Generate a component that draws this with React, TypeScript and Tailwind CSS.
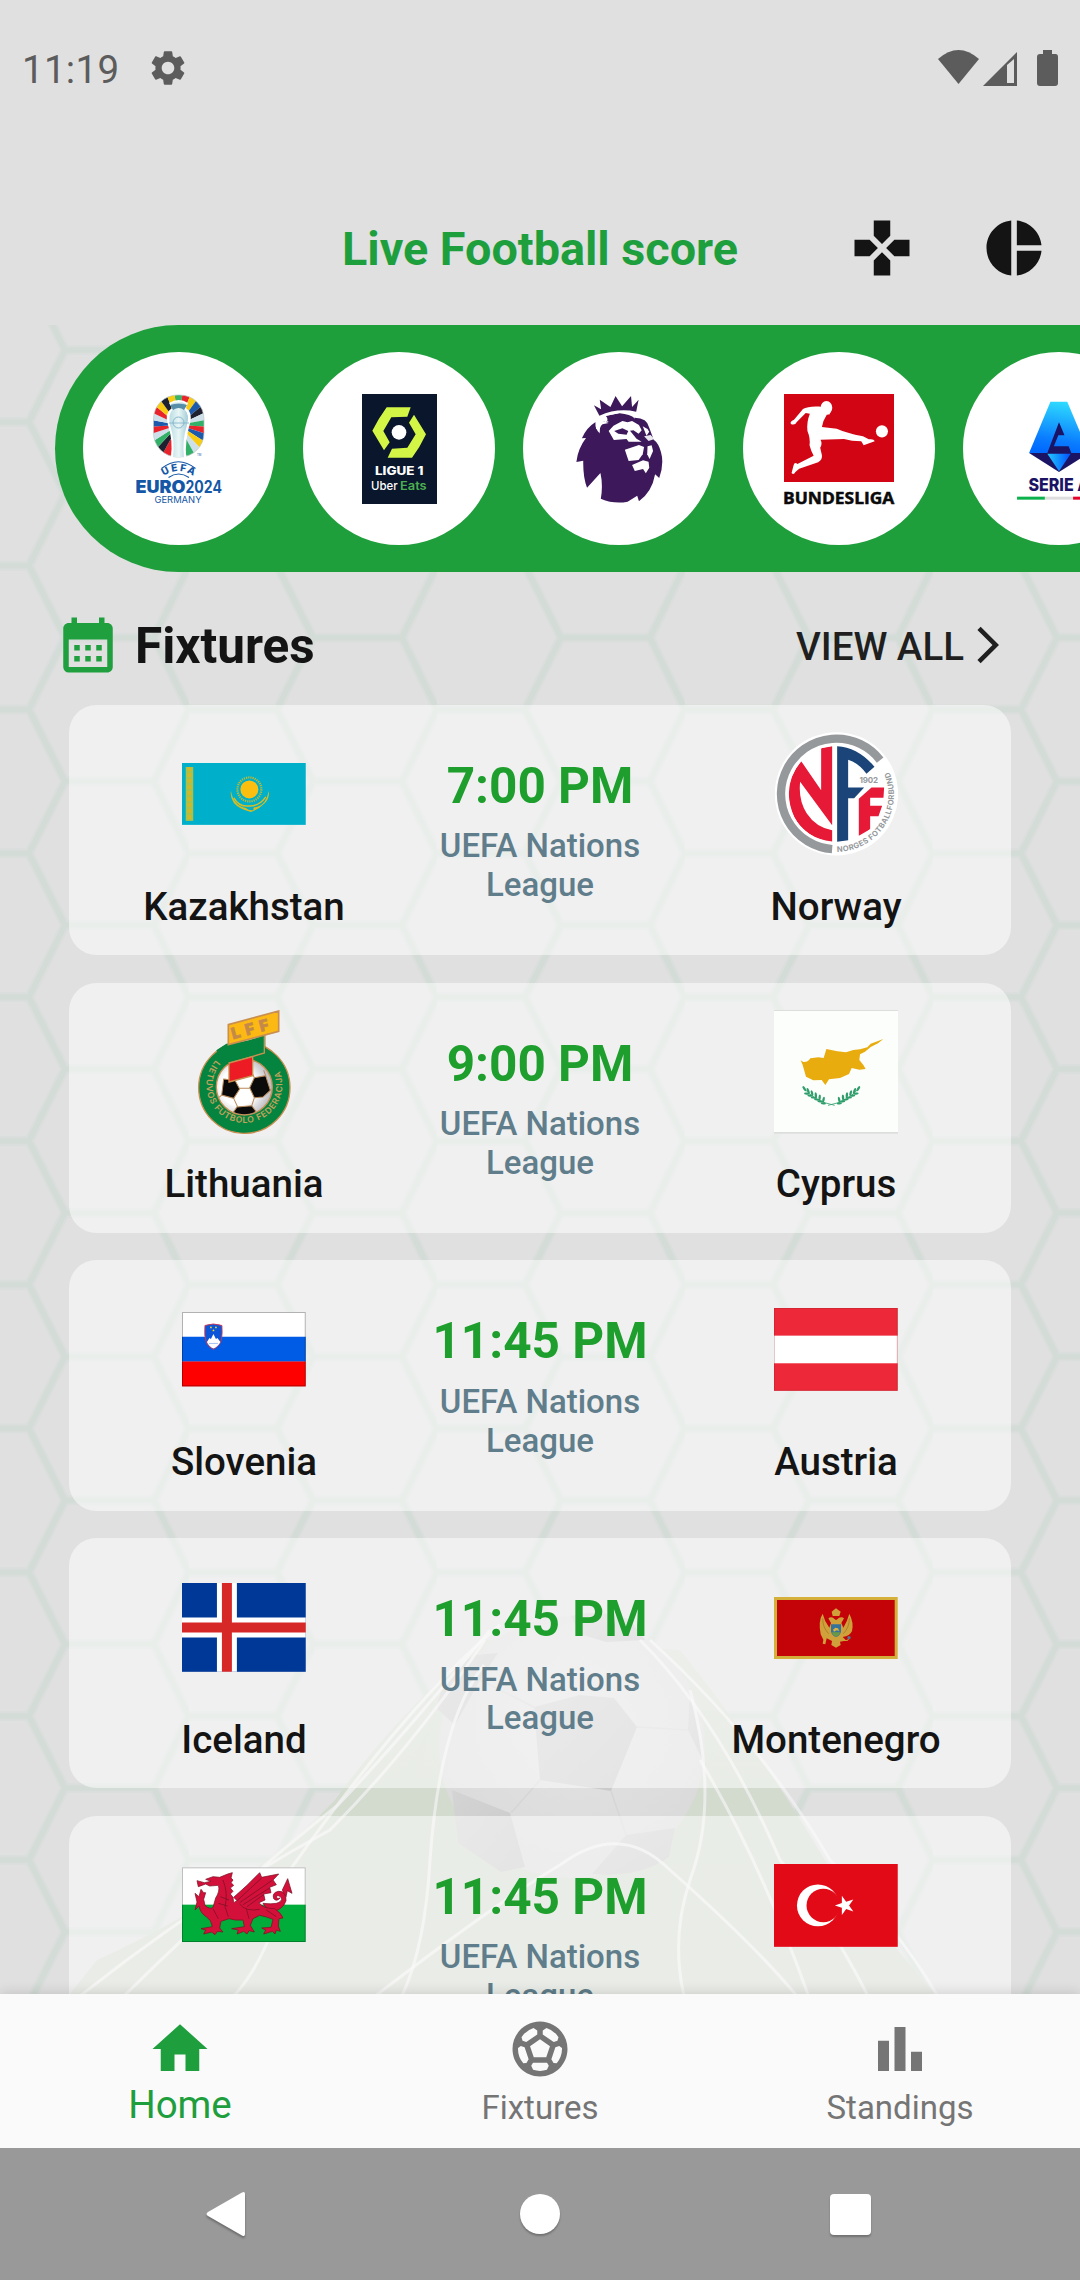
import React from "react";
import {
  MdHome,
  MdSportsSoccer,
  MdGamepad,
  MdPieChart,
  MdCalendarMonth,
  MdArrowForwardIos,
  MdSettings,
} from "react-icons/md";

/* ---------- League logos ---------- */

const rayColors = [
  "#3bb36b", "#e8232b", "#f9cb12", "#1d5aab", "#1f2130", "#cfe0ea", "#33b067", "#e8232b", "#1d5aab", "#f9cb12", "#cfe0ea", "#33b067",
  "#bfe2e6", "#f4a51c", "#e8232b", "#1f2130", "#33b067", "#cfe0ea", "#e8232b", "#1d5aab", "#cfe0ea", "#e8232b", "#f9cb12", "#1f2130", "#f9cb12",
];

function EuroLogo() {
  const n = rayColors.length;
  const cx = 54.5;
  const cy = 31;
  return (
    <svg viewBox="0 0 110 110" className="size-[110px]">
      <defs>
        <clipPath id="euro-oval">
          <rect x="29.5" y="1" width="50.5" height="62" rx="24" />
        </clipPath>
        <linearGradient id="euro-cup" x1="0" x2="1">
          <stop offset="0" stopColor="#b9dde4" />
          <stop offset="0.5" stopColor="#e9f6f5" />
          <stop offset="1" stopColor="#a4cdd9" />
        </linearGradient>
        <path id="euro-arc" d="M38 83 Q54.5 71 71 83" />
      </defs>
      <g clipPath="url(#euro-oval)">
        {rayColors.map((c, i) => {
          const a = ((i - 0.5) / n) * Math.PI * 2 - Math.PI / 2;
          const b = ((i + 0.5) / n) * Math.PI * 2 - Math.PI / 2;
          return (
            <path
              key={i}
              fill={c}
              d={`M${cx} ${cy}L${cx + 60 * Math.cos(a)} ${cy + 60 * Math.sin(a)}L${cx + 60 * Math.cos(b)} ${cy + 60 * Math.sin(b)}Z`}
            />
          );
        })}
      </g>
      <rect x="29.5" y="1" width="50.5" height="62" rx="24" fill="none" stroke="#b9c9c4" strokeWidth="0.7" />
      <path d="M45 9 Q55 3 64 9 L62 14 Q69 19 66 29 Q61 46 62 63 H47 Q49 46 44 31 Q40 19 48 14Z" fill="#fff" />
      <path d="M47 10 Q55 5 62 10 L60 15 Q66 20 63 31 Q58 46 60 63 H49 Q51 46 46 31 Q44 20 49 15Z" fill="url(#euro-cup)" />
      <path d="M46 11 Q55 8 63 11 L60 16 Q55 12 49 16Z" fill="#568da9" />
      <circle cx="54.5" cy="28.5" r="5.5" fill="none" stroke="#7fb0c8" strokeWidth="0.9" />
      <path d="M45 29 H65" stroke="#7fb0c8" strokeWidth="0.8" />
      <path d="M37.5 74.5 Q54.5 61 71.5 74.5" fill="none" stroke="#1457a6" strokeWidth="1.2" />
      <path d="M44.5 83.5 Q54.5 76.5 65 83.5" fill="none" stroke="#1457a6" strokeWidth="1.2" />
      <text fontFamily="Inter" fontWeight="800" fontSize="10" fill="#1457a6">
        <textPath href="#euro-arc" startOffset="50%" textAnchor="middle" textLength="32">UEFA</textPath>
      </text>
      <text x="11.5" y="98.8" fontFamily="Inter" fontWeight="900" fontSize="17" fill="#1457a6" textLength="50" lengthAdjust="spacingAndGlyphs">EURO</text>
      <text x="61.5" y="98.8" fontFamily="Inter" fontWeight="700" fontSize="17" fill="#1457a6" textLength="36.5" lengthAdjust="spacingAndGlyphs">2024</text>
      <text x="30.5" y="109" fontFamily="Inter" fontWeight="400" fontSize="9.6" fill="#1457a6" textLength="47" lengthAdjust="spacingAndGlyphs">GERMANY</text>
      <text x="73" y="61.5" fontFamily="Inter" fontSize="2.8" fill="#1457a6">TM</text>
    </svg>
  );
}

function LigueLogo() {
  return (
    <svg viewBox="966 252 225 330" className="h-[110px] w-[75px]">
      <rect x="966" y="252" width="225" height="330" fill="#09162c" />
      <path d="M1040 292H1112L1102 320L1054 322L1030 363L1049 397L1032 421L997 362Q1016 325 1040 292Z" fill="#d2f546" />
      <path d="M1122 314L1158 373Q1140 412 1116 443H1043L1056 416L1102 413L1127 373L1107 338Z" fill="#d2f546" />
      <circle cx="1077" cy="367" r="22" fill="#fff" />
      <text x="1005" y="495" fontFamily="Inter" fontWeight="800" fontSize="34" fill="#fff" textLength="145" lengthAdjust="spacingAndGlyphs">LIGUE 1</text>
      <text x="993" y="541" fontFamily="Inter" fontWeight="500" fontSize="37" fill="#fff" textLength="80" lengthAdjust="spacingAndGlyphs">Uber</text>
      <text x="1080" y="541" fontFamily="Inter" fontWeight="600" fontSize="37" fill="#4cae50" textLength="80" lengthAdjust="spacingAndGlyphs">Eats</text>
    </svg>
  );
}

function PremierLogo() {
  return (
    <svg viewBox="70 251 320 330" preserveAspectRatio="none" className="size-[110px]">
      <g fill="#3d195b">
        <path d="M157 285L178 297L174 268L205 290L220 257L239 288L265 257L268 290L287 268L280 304Q225 292 173 316Z" />
        <path d="M162 335Q135 352 122 384L134 383Q110 415 106 455L126 451Q125 500 137 532L176 488Q184 525 177 565Q215 582 255 574L283 556L288 573Q326 545 335 492L347 503Q362 460 352 425Q345 398 331 388L318 352Q312 322 276 322Q262 305 230 308L192 317Q202 330 190 336L184 330Q172 340 172 360L163 355Z" />
      </g>
      <g fill="#fff">
        <path d="M163 322Q170 325 178 319Q225 300 270 306L277 325Q262 312 232 309L192 316Q187 324 200 335L184 332Q170 342 173 368Q160 355 162 338Z" />
        <path d="M200 362L214 346L240 332L255 336L268 332L288 344L296 360L287 370L272 360L262 361L281 385L296 394H258L252 386L215 389Z" />
        <path d="M299 348L313 356L318 364L310 376Z" />
        <path d="M247 418L288 404L303 410L299 432L287 449L258 452Z" />
        <path d="M313 408L325 405L329 422L319 446L312 432Z" />
        <path d="M268 464L300 450L316 454L318 472L308 489L300 476L276 482Z" />
        <path d="M303 378L316 392L333 386L322 374Z" opacity="0.9" />
      </g>
      <path d="M216 362L240 354L257 362L252 373L228 370Z" fill="#3d195b" />
      <path d="M166 345Q170 330 184 332L200 338L182 342Q172 350 174 370Z" fill="#fff" />
    </svg>
  );
}

function BundesligaLogo() {
  return (
    <svg viewBox="709 251 319 330" preserveAspectRatio="none" className="size-[110px] overflow-visible">
      <rect x="709" y="251" width="319" height="264" fill="#d20515" />
      <ellipse cx="832" cy="292" rx="17" ry="20" fill="#fff" />
      <path
        d="M820 290C795 287 775 290 764 296L738 328Q725 333 729 341Q741 346 746 335L772 308L784 310Q774 335 777 362Q786 385 783 405Q788 425 795 436L748 461Q739 452 736 468L731 488Q737 496 742 485L753 475L808 456Q821 448 819 435L814 412Q821 400 815 388L883 386Q905 393 933 393L940 405L972 393Q970 385 955 387L938 378Q890 368 862 355L819 350Q822 330 833 313L842 312L840 290Z"
        fill="#fff"
      />
      <ellipse cx="993" cy="363" rx="17.5" ry="18.5" fill="#fff" />
      <text x="706" y="580" fontFamily="Open Sans" fontWeight="700" fontSize="49" fill="#0a0a0a" stroke="#0a0a0a" strokeWidth="1.5" textLength="323" lengthAdjust="spacingAndGlyphs">BUNDESLIGA</text>
    </svg>
  );
}

function SerieALogo() {
  return (
    <svg viewBox="1347 251 320 330" preserveAspectRatio="none" className="size-[110px]">
      <defs>
        <linearGradient id="serie-a" x1="0.6" y1="0" x2="0.4" y2="1">
          <stop offset="0" stopColor="#2fdcff" />
          <stop offset="0.75" stopColor="#0a7cff" />
          <stop offset="1" stopColor="#0069ff" />
        </linearGradient>
        <linearGradient id="serie-gem" x1="0" x2="1">
          <stop offset="0" stopColor="#22c8ff" />
          <stop offset="1" stopColor="#0050ff" />
        </linearGradient>
      </defs>
      <path d="M1482 274H1531L1594 428H1420Z" fill="url(#serie-a)" />
      <path d="M1507 336L1523 375H1505L1492 408H1535L1543 428H1473Z" fill="#1b1464" />
      <path d="M1420 428H1594L1507 485Z" fill="#1b1464" />
      <path d="M1473 430H1541L1507 483Z" fill="url(#serie-gem)" />
      <text x="1418" y="542" fontFamily="Inter" fontWeight="800" fontSize="51" fill="#1b1464" textLength="178" lengthAdjust="spacingAndGlyphs">SERIE A</text>
      <rect x="1385" y="559" width="81" height="9" fill="#0bb14b" />
      <rect x="1466" y="559" width="82" height="9" fill="#dedede" />
      <rect x="1548" y="559" width="81" height="9" fill="#e4002b" />
    </svg>
  );
}

/* ---------- Team crests and flags ---------- */

function Kazakhstan() {
  return (
    <svg viewBox="0 0 124 62" className="w-full">
      <rect width="124" height="62" fill="#00b0cb" />
      <path d="M7.5 4V58" stroke="#a9c04a" strokeWidth="7.5" />
      <path d="M7.5 4V58" stroke="#cdb92c" strokeWidth="4" strokeDasharray="4 2" />
      <circle cx="67.5" cy="26.5" r="12" fill="none" stroke="#c5b92c" strokeWidth="2.2" strokeDasharray="1.2 1" />
      <circle cx="67.5" cy="26.5" r="9" fill="#fdbf0f" />
      <path d="M49 28Q52 43 64 45Q67 48 72 47Q70 44 75 44Q84 42 87 28Q88 36 82 41Q76 47 69 49Q57 46 52 40Q48 34 49 28Z" fill="#d8bd22" />
      <path d="M52 35Q57 44 66 43Q77 44 84 34" fill="none" stroke="#d8bd22" strokeWidth="1.5" />
    </svg>
  );
}

function Norway() {
  return (
    <svg viewBox="101.6 65.6 371.2 371.2" className="size-full">
      <defs>
        <path id="nff-ring" d="M291 425A172 172 0 0 0 436 163" />
        <clipPath id="nff-inner">
          <circle cx="290" cy="252" r="145" />
        </clipPath>
      </defs>
      <circle cx="289" cy="251" r="185" fill="#fff" />
      <path d="M276 417A166 166 0 1 1 420 150" fill="none" stroke="#96999c" strokeWidth="25" />
      <g clipPath="url(#nff-inner)">
        <path d="M183 153L243 240V114L276 108V345L180 215Q174 270 200 310Q228 352 276 360V394Q195 385 162 320Q122 228 183 153Z" fill="#e61937" />
        <path d="M291 108Q355 112 403 170L379 191Q355 158 324 149V232H372L342 264H324V390L291 395Z" fill="#1b4478" />
        <path d="M394 232H432L430 263H390V287H426L415 318H390V357L356 377V266Z" fill="#e61937" />
      </g>
      <text x="358" y="220" fontFamily="Inter" fontWeight="700" fontSize="24" fill="#96999c" textLength="56">1902</text>
      <text fontFamily="Inter" fontWeight="700" fontSize="23" fill="#96999c">
        <textPath href="#nff-ring" textLength="338">NORGES FOTBALLFORBUND</textPath>
      </text>
    </svg>
  );
}

function Lithuania() {
  return (
    <svg viewBox="67 59 371.2 371.2" className="size-full">
      <defs>
        <path id="lff-ring" d="M168 209A114 114 0 1 0 340 209" />
        <radialGradient id="lff-ball" cx="0.4" cy="0.5" r="0.65">
          <stop offset="0.5" stopColor="#fff" />
          <stop offset="1" stopColor="#a9a9b2" />
        </radialGradient>
        <clipPath id="lff-clip">
          <circle cx="254" cy="290" r="82" />
        </clipPath>
      </defs>
      <circle cx="254" cy="292" r="137" fill="#058440" stroke="#c98f50" strokeWidth="4" />
      <circle cx="254" cy="290" r="84" fill="url(#lff-ball)" stroke="#c98f50" strokeWidth="4" />
      <g clipPath="url(#lff-clip)" stroke="#b98a58" strokeWidth="3">
        <path d="M192 266L226 270L240 296L222 324L186 314Z" fill="#0a0a0a" />
        <path d="M284 262L318 256L332 300L310 320L284 322L270 292Z" fill="#0a0a0a" />
        <path d="M232 350L276 346L288 362L276 378H232L222 364Z" fill="#0a0a0a" />
        <path d="M240 294H270M222 324L234 350M284 322L276 347M284 262L276 244M318 256L312 240M186 314L168 330M226 270L236 256" fill="none" />
      </g>
      <path d="M200 160Q260 158 317 132V188L277 200L208 224Q185 214 170 180Z" fill="#058440" />
      <path d="M314 133V188L208 219" fill="none" stroke="#c98f50" strokeWidth="4" />
      <path d="M208 218L279 199V256L208 275Z" fill="#ed1b24" stroke="#c98f50" strokeWidth="4" />
      <path d="M206 103L357 62V123L206 163Z" fill="#fdb913" stroke="#c98f50" strokeWidth="5" />
      <text transform="translate(220 147) rotate(-15.2)" fontFamily="Inter" fontWeight="900" fontSize="46" fill="#c58a48" stroke="#c58a48" strokeWidth="2" letterSpacing="17">LFF</text>
      <text fontFamily="Inter" fontWeight="600" fontSize="26" fill="#c5a35c">
        <textPath href="#lff-ring" textLength="482">LIETUVOS FUTBOLO FEDERACIJA</textPath>
      </text>
    </svg>
  );
}

function Cyprus() {
  const leaves = [0, 1, 2, 3, 4, 5];
  return (
    <svg viewBox="72 30 371.2 371.2" className="size-full">
      <rect x="72" y="30" width="372" height="371" fill="#dcdedc" />
      <rect x="72" y="33" width="372" height="363" fill="#fcfefb" />
      <path
        d="M152 181L160 186Q175 187 181 175L205 172L221 174L229 147L262 154L288 157L310 150L330 148L352 142L362 131L400 117L384 130L362 141L345 155L330 163L328 180L340 195L347 207L328 209L305 204L297 222L270 234L237 238L226 255L215 240L190 241L168 230L158 195Z"
        fill="#e8ac0e"
      />
      <g fill="#2f9e6b">
        {leaves.map((i) => (
          <g key={i}>
            <ellipse cx={163 + i * 11.5} cy={266 + i * 6.6} rx="3.6" ry="9" transform={`rotate(${-32 + i * 9} ${163 + i * 11.5} ${266 + i * 6.6})`} />
            <ellipse cx={170 + i * 10} cy={281 + i * 5.8} rx="3.2" ry="8" transform={`rotate(${-82} ${170 + i * 10} ${281 + i * 5.8})`} />
            <ellipse cx={325 - i * 11.5} cy={266 + i * 6.6} rx="3.6" ry="9" transform={`rotate(${32 - i * 9} ${325 - i * 11.5} ${266 + i * 6.6})`} />
            <ellipse cx={318 - i * 10} cy={281 + i * 5.8} rx="3.2" ry="8" transform={`rotate(${82} ${318 - i * 10} ${281 + i * 5.8})`} />
          </g>
        ))}
        <path d="M160 263Q195 305 254 316M328 263Q295 305 234 316" fill="none" stroke="#2f9e6b" strokeWidth="2.4" />
      </g>
    </svg>
  );
}

function Slovenia() {
  return (
    <svg viewBox="0 0 124 74.5" className="w-full">
      <rect width="124" height="25" fill="#fff" />
      <rect y="24.8" width="124" height="25" fill="#005ce5" />
      <rect y="49.6" width="124" height="25" fill="#f00" />
      <rect x="0.5" y="0.5" width="123" height="73.5" fill="none" stroke="#000" strokeOpacity="0.3" />
      <path d="M23 13.5Q31.5 10.5 40 13.5Q41 29 37 33Q34 36 31.5 37.5Q26 35 24.5 31Q22 24 23 13.5Z" fill="#0b56d8" stroke="#d8344a" strokeWidth="0.9" />
      <path d="M25 30L27.5 26L29 27L31.5 22L34 27L35.5 26L38.5 30Q36 35 31.5 36.5Q27 35 25 30Z" fill="#fff" />
      <g fill="#f5d92a">
        <circle cx="29" cy="15.5" r="0.9" />
        <circle cx="34" cy="15.5" r="0.9" />
        <circle cx="31.5" cy="18.5" r="0.9" />
      </g>
      <path d="M27 31.5H36" stroke="#8ab0ee" strokeWidth="0.8" />
    </svg>
  );
}

function Austria() {
  return (
    <svg viewBox="0 0 124 83" className="w-full">
      <rect width="124" height="83" fill="#ed2939" />
      <rect y="27.7" width="124" height="27.7" fill="#fff" />
      <rect x="0.5" y="0.5" width="123" height="82" fill="none" stroke="#8a1a24" strokeOpacity="0.25" />
    </svg>
  );
}

function Iceland() {
  return (
    <svg viewBox="0 0 124 89" className="w-full">
      <rect width="124" height="89" fill="#003897" />
      <path d="M45 0V89M0 44.5H124" stroke="#fff" strokeWidth="20" />
      <path d="M45 0V89M0 44.5H124" stroke="#d72828" strokeWidth="10" />
    </svg>
  );
}

function Montenegro() {
  return (
    <svg viewBox="42 -45 371.2 371.2" className="size-full">
      <rect x="42" y="48" width="371" height="186" fill="#d4af3a" />
      <rect x="51" y="57" width="353" height="168" fill="#c40308" />
      <g fill="#d0a03a">
        <path d="M215 92L222 86L228 82L234 86L242 92L238 105H218Z" />
        <path d="M205 112Q215 104 226 116H230Q242 104 252 112L244 126L250 140Q262 120 268 98Q282 125 276 150Q270 165 248 168L258 178L270 172L262 180H252L240 182L242 192L228 200L214 192L216 180L200 172L196 190L188 188L190 176L182 160Q174 120 188 98Q194 122 208 140L213 126Z" />
      </g>
      <path d="M188 112Q188 140 206 158M268 112Q268 140 250 158" stroke="#a87b28" strokeWidth="2.5" fill="none" />
      <path d="M213 130H243V152Q240 164 228 168Q216 164 213 152Z" fill="#35729c" />
      <path d="M215 154H241Q238 164 228 167Q218 164 215 154Z" fill="#6b9a42" />
      <path d="M219 146L226 140L234 142L238 150L230 148L222 152Z" fill="#d9b343" />
      <circle cx="267" cy="170" r="5" fill="#4b7d8f" />
    </svg>
  );
}

function Wales() {
  return (
    <svg viewBox="67 -21 371.2 371.2" className="size-full">
      <rect x="67" y="52" width="371" height="112" fill="#fff" />
      <rect x="67" y="164" width="371" height="112" fill="#00ac3a" />
      <rect x="68.5" y="53.5" width="368" height="221" fill="none" stroke="#000" strokeOpacity="0.25" strokeWidth="3" />
      <g fill="#d3103a" stroke="#7e1024" strokeWidth="2.2" strokeLinejoin="round">
        <path d="M330 190Q372 178 379 152Q380 122 356 124Q336 128 342 146Q352 156 361 144Q350 148 350 138Q362 134 366 148Q362 166 310 160Z" />
        <path d="M372 128L368 120L384 86L397 130L383 122L379 140Z" />
        <path d="M232 152L222 142L262 106L300 68L306 82L357 72L340 90L350 104L330 112L334 128L312 132L316 150L298 158Q310 176 345 176Q366 190 370 204L358 206L356 228L362 244L350 240L346 252L338 244L312 252L318 240L306 234L334 232L340 208Q322 200 300 196L280 206L272 226L284 246L268 242L262 252L252 244L232 252L236 240L216 236L254 230L250 210Q226 212 208 206L184 214L180 234L190 246L174 244L166 254L156 246L132 252L138 240L124 236L158 230L152 212L140 200Q122 190 118 168L106 180L112 156L106 130L118 140L124 118L132 128L138 128L132 148L136 166Q150 180 160 172L168 144Q182 122 176 106L150 108L138 102L116 110L112 92L134 98L154 94L138 88L160 80L180 82L204 72L218 68L214 84L220 90L214 98L222 106L212 114L220 124L212 132L220 142L222 158Z" />
      </g>
      <g fill="none" stroke="#7e1024" strokeWidth="2.4">
        <path d="M232 152L306 84M240 158L336 92M250 164L330 114M262 170L312 134M190 90Q206 130 196 170L206 200M182 140L208 150M176 160L204 168M260 176L268 206M240 162Q258 186 300 178" />
        <path d="M320 180L350 200M160 176L176 206" />
      </g>
    </svg>
  );
}

function Turkey() {
  return (
    <svg viewBox="0 0 124 83" className="w-full">
      <rect width="124" height="83" fill="#e30a17" />
      <circle cx="44" cy="41.5" r="21" fill="#fff" />
      <circle cx="49.4" cy="41.5" r="16.8" fill="#e30a17" />
      <path d="M61 41.5L68 39.2V31.8L72.3 37.800L79.500 35.500L75.200 41.500L79.500 47.500L72.300 45.200L68 51.200V43.800Z" fill="#fff" />
    </svg>
  );
}

/* ---------- Backdrop ---------- */

const hexLines = "M124 0H213M124 143.8H213M0 71.9H88L124 0M88 71.9L124 143.8M213 0L248 71.9M213 143.8L248 71.9";

function Backdrop() {
  return (
    <svg viewBox="0 325 1080 1669" className="absolute left-0 top-[325px] h-[1669px] w-[1080px]">
      <defs>
        <pattern id="hex" x="189" y="350" width="248" height="143.8" patternUnits="userSpaceOnUse">
          <path d={hexLines} fill="none" stroke="#cfdad3" strokeWidth="10" strokeOpacity="0.35" />
          <path d={hexLines} fill="none" stroke="#cfdad3" strokeWidth="5.5" strokeOpacity="0.55" />
        </pattern>
        <linearGradient id="grass" x1="0" y1="0" x2="0" y2="1">
          <stop offset="0" stopColor="#d5dccf" stopOpacity="0.6" />
          <stop offset="0.4" stopColor="#d3dbce" />
          <stop offset="1" stopColor="#d4dacf" />
        </linearGradient>
        <radialGradient id="ball" cx="0.5" cy="0.4" r="0.6">
          <stop offset="0" stopColor="#e3e3e3" />
          <stop offset="1" stopColor="#dadada" />
        </radialGradient>
        <linearGradient id="patch" x1="0" y1="0" x2="1" y2="1">
          <stop offset="0" stopColor="#d4d4d4" />
          <stop offset="1" stopColor="#c9c9c9" />
        </linearGradient>
      </defs>
      <rect x="0" y="325" width="1080" height="1669" fill="url(#hex)" />
      <path d="M485 1640Q400 1710 335 1800Q250 1890 97 1960L65 2000H940Q880 1930 825 1860Q760 1750 680 1650Z" fill="url(#grass)" />
      <ellipse cx="572" cy="1747" rx="133" ry="131" fill="url(#ball)" />
      <g fill="url(#patch)">
        <path d="M571 1616Q600 1608 630 1620L645 1640L606 1642L580 1634Z" />
        <path d="M498 1653L480 1680L455 1725L436 1708Q445 1670 475 1655Z" />
        <path d="M534 1707L580 1695L614 1698L637 1727L611 1791L540 1780Z" />
        <path d="M452 1790L510 1813L525 1867L501 1872L458 1843Z" />
        <path d="M626 1835L675 1828L669 1857Q640 1878 592 1874Z" />
        <path d="M690 1687L706 1767L688 1730Z" />
      </g>
      <path d="M511 1813L540 1780M611 1791L626 1835M637 1727L688 1730M534 1707L480 1680" fill="none" stroke="#d6d6d6" strokeWidth="1.5" />
      <g fill="none" stroke="#f2f2f2" strokeOpacity="0.75" strokeWidth="3">
        <path d="M490 1630Q400 1740 338 1805Q230 1890 120 2000" />
        <path d="M485 1640Q410 1750 330 1830Q200 1900 75 2000" />
        <path d="M484 1665Q440 1720 430 1860Q425 1950 400 2000" />
        <path d="M500 1625Q410 1700 290 1870Q270 1960 230 2000" />
        <path d="M640 1640Q720 1720 780 1860Q830 1920 870 2000" />
        <path d="M650 1640Q760 1740 830 1860Q900 1930 940 2000" />
        <path d="M690 1690Q720 1800 690 1880Q670 1940 685 2000" />
        <path d="M370 2000Q500 1900 560 1865Q620 1820 670 1870Q760 1950 800 2000" />
        <path d="M700 1760Q760 1860 810 2000" />
      </g>
    </svg>
  );
}

/* ---------- Screen sections ---------- */

function StatusBar() {
  return (
    <div className="flex h-[139px] shrink-0 items-center justify-between pl-[22px] pr-[22px] text-[#5c5c5c]">
      <div className="flex items-center">
        <span className="text-[38.5px] leading-[45px] tracking-[0.3px]">11:19</span>
        <MdSettings className="ml-[28px] mt-[-4px] size-[42px]" />
      </div>
      <div className="flex items-center">
        <svg viewBox="0 0 41 34" className="mt-[-5px] h-[34px] w-[41px]" fill="currentColor">
          <path d="M0 9Q20.5 -9 41 9L20.5 34Z" />
        </svg>
        <svg viewBox="0 0 34 34" className="ml-[4px] mt-[-2px] h-[34px] w-[34px]">
          <path d="M0 34L34 0V34Z" fill="currentColor" />
          <path d="M24 13L31 7V31H24Z" fill="#e0e0e0" />
        </svg>
        <svg viewBox="0 0 21 36" className="ml-[20px] mt-[-4px] h-[36px] w-[21px]" fill="currentColor">
          <path d="M6 0H15V4H18.500Q21 4 21 7V33Q21 36 18 36H3Q0 36 0 33V7Q0 4 3 4H6Z" />
        </svg>
      </div>
    </div>
  );
}

const leagues = [EuroLogo, LigueLogo, PremierLogo, BundesligaLogo, SerieALogo];

const fixtures = [
  { home: "Kazakhstan", away: "Norway", time: "7:00 PM", Home: Kazakhstan, Away: Norway },
  { home: "Lithuania", away: "Cyprus", time: "9:00 PM", Home: Lithuania, Away: Cyprus },
  { home: "Slovenia", away: "Austria", time: "11:45 PM", Home: Slovenia, Away: Austria },
  { home: "Iceland", away: "Montenegro", time: "11:45 PM", Home: Iceland, Away: Montenegro },
  { home: "Wales", away: "Turkey", time: "11:45 PM", Home: Wales, Away: Turkey },
];

function Team({ name, Crest }: { name: string; Crest: () => React.JSX.Element }) {
  return (
    <div className="flex flex-col items-center pt-[27.5px]">
      <div className="flex size-[123.75px] items-center justify-center">
        <Crest />
      </div>
      <div className="mt-[27.5px] text-[38.5px] font-medium leading-[45px] text-[#141414]">{name}</div>
    </div>
  );
}

export default function App() {
  return (
    <div className="relative flex h-[2280px] w-[1080px] flex-col overflow-hidden bg-[#e0e0e0] font-['Roboto',sans-serif]">
      <Backdrop />
      <div className="relative flex min-h-0 flex-1 flex-col overflow-hidden">
        <StatusBar />
        <header className="grid h-[186px] shrink-0 grid-cols-[1fr_auto_1fr] items-center pr-[33px] pt-[32px]">
          <span />
          <h1 className="ml-[33px] mt-[2px] text-[46.75px] font-bold leading-[55px] text-[#1e9f3d]">Live Football score</h1>
          <div className="flex justify-end gap-[66px] text-[#141414]">
            <MdGamepad className="size-[66px]" />
            <MdPieChart className="size-[66px]" />
          </div>
        </header>

        <div className="ml-[55px] flex h-[247.250px] shrink-0 items-center gap-[27.5px] overflow-hidden rounded-l-full bg-[#1f9e3c] pl-[27.800px]">
          {leagues.map((Logo, i) => (
            <div key={i} className="flex size-[192.5px] shrink-0 items-center justify-center rounded-full bg-white">
              <Logo />
            </div>
          ))}
        </div>

        <div className="flex h-[132.500px] shrink-0 items-center justify-between pl-[55px] pr-[70px] pt-[13px]">
          <div className="flex items-center">
            <MdCalendarMonth className="size-[66px] text-[#1f9f3e]" />
            <h2 className="ml-[14px] mt-[2px] text-[49.5px] font-bold leading-[58px] text-[#141414]">Fixtures</h2>
          </div>
          <div className="flex items-center text-[#1f1f1f]">
            <span className="mt-[2px] text-[38.5px] font-medium leading-[45px]">VIEW ALL</span>
            <MdArrowForwardIos className="ml-[2px] size-[44px]" />
          </div>
        </div>

        <main className="flex shrink-0 flex-col gap-[27.5px] px-[69px]">
          {fixtures.map((f, i) => (
            <section key={i} className="grid h-[250.25px] shrink-0 grid-cols-[350px_242px_350px] rounded-[27.5px] bg-white/50">
              <Team name={f.home} Crest={f.Home} />
              <div className="flex flex-col items-center pt-[52px] text-center">
                <div className="whitespace-nowrap text-[49.5px] font-bold leading-[58px] text-[#1e9e2c]">{f.time}</div>
                <div className="mt-[12.6px] text-[33px] font-medium leading-[38.67px] text-[#607d8b]">
                  UEFA Nations
                  <br />
                  League
                </div>
              </div>
              <Team name={f.away} Crest={f.Away} />
            </section>
          ))}
        </main>
      </div>

      <nav className="relative grid h-[154px] shrink-0 grid-cols-3 bg-[#fafafa] text-[#757575] shadow-[0_-1px_12px_rgba(0,0,0,0.14)]">
        <div className="flex flex-col items-center pt-[22px] text-[#1e9e3d]">
          <MdHome className="size-[66px]" />
          <span className="text-[38.5px] leading-[45px]">Home</span>
        </div>
        <div className="flex flex-col items-center pt-[22px]">
          <MdSportsSoccer className="size-[66px]" />
          <span className="mt-[6px] text-[33px] leading-[39px]">Fixtures</span>
        </div>
        <div className="flex flex-col items-center pt-[22px]">
          <svg viewBox="0 0 24 24" className="size-[66px]" fill="currentColor">
            <path d="M4 9h4v11H4zM16 13h4v7h-4zM10 4h4v16h-4z" />
          </svg>
          <span className="mt-[6px] text-[33px] leading-[39px]">Standings</span>
        </div>
      </nav>

      <div className="relative flex h-[132px] shrink-0 items-center bg-[#999] pl-[206px]">
        <svg viewBox="0 0 40 46" className="h-[46px] w-[40px] drop-shadow-[0_2px_1px_rgba(0,0,0,0.3)]">
          <path d="M2 21L36 1.500Q39 0 39 3V43Q39 46 36 44.500L2 25Q-1 23 2 21Z" fill="#fff" />
        </svg>
        <div className="ml-[274px] size-[40px] rounded-full bg-white shadow-[0_2px_2px_rgba(0,0,0,0.25)]" />
        <div className="ml-[270px] size-[41px] rounded-[4px] bg-white shadow-[0_2px_2px_rgba(0,0,0,0.25)]" />
      </div>
    </div>
  );
}
